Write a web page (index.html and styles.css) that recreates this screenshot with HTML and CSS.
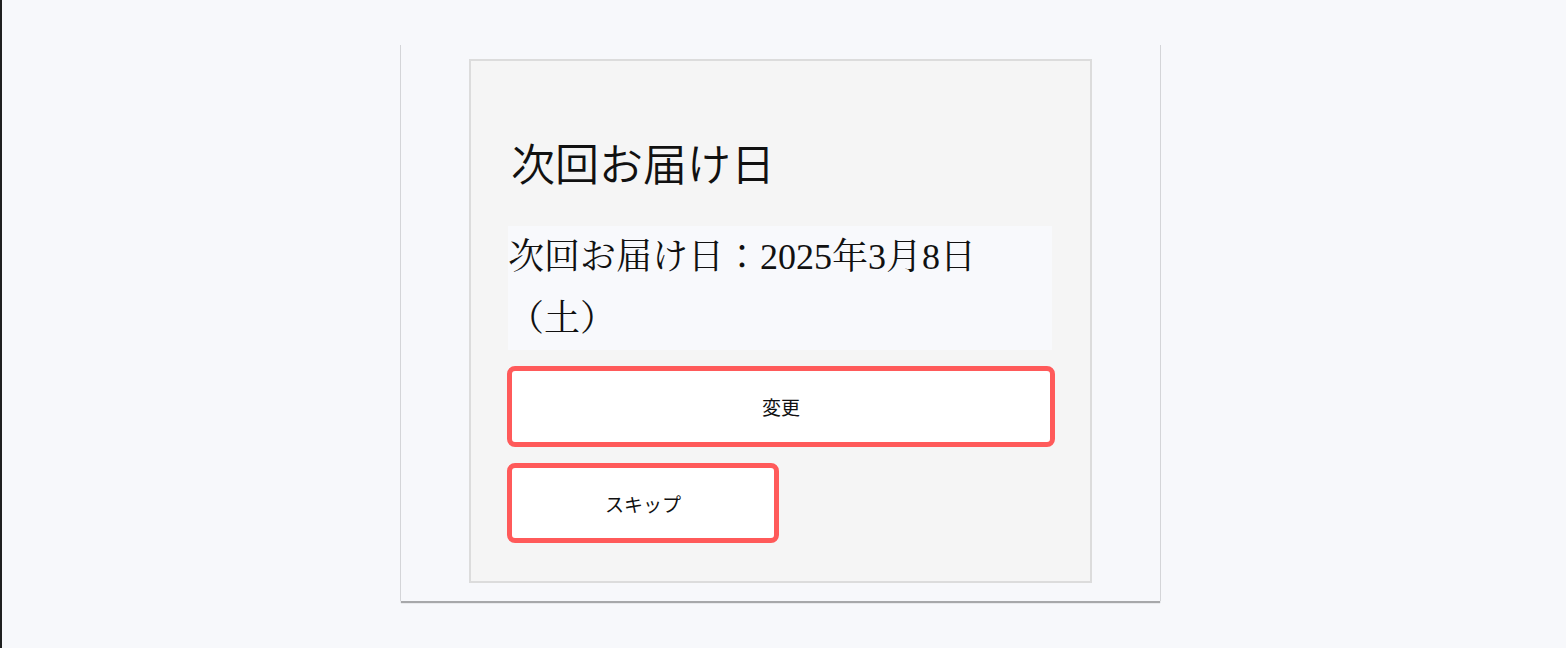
FILE: index.html
```html
<!DOCTYPE html>
<html lang="ja">
<head>
<meta charset="utf-8">
<title>次回お届け日</title>
<link rel="stylesheet" href="styles.css">
</head>
<body>
<div class="page">
  <div class="card">
    <section class="delivery">
      <h2 class="delivery-title">次回お届け日</h2>
      <p class="delivery-date">次回お届け日：2025年3月8日（土）</p>
      <div class="actions">
        <button class="btn btn-full" type="button">変更</button>
        <button class="btn btn-half" type="button">スキップ</button>
      </div>
    </section>
  </div>
</div>
</body>
</html>
```

FILE: styles.css
```css
html, body {
  margin: 0;
  padding: 0;
}
body {
  background: #f7f8fb;
  border-left: 2px solid #1f2020;
  min-height: 648px;
  box-sizing: border-box;
  font-family: "Noto Sans CJK JP", "Noto Sans", sans-serif;
  color: #111;
}
.page {
  display: flex;
  padding: 45px 0 0 399px;
}
.card {
  width: 759px;
  box-sizing: border-box;
  padding: 14px 68px 18px 68px;
  background: #f7f8fb;
  box-shadow: -1px 0 0 #d4d5d8, 1px 0 0 #d4d5d8, 0 2px 1px rgba(0,0,0,0.32);
}
.delivery {
  background: #f5f5f5;
  border: 2px solid #dcdcdc;
  padding: 69px 35px 38px 36px;
  display: flex;
  flex-direction: column;
}
.delivery-title {
  margin: 0 0 0 4px;
  font-size: 44px;
  font-weight: 350;
  line-height: 64px;
  color: #111;
}
.delivery-date {
  margin: 32px 3px 16px 1px;
  background: #f8f9fc;
  font-family: "Liberation Serif", "Noto Serif CJK JP", "Noto Sans CJK JP", serif;
  font-size: 36px;
  line-height: 62px;
  color: #111;
}
.actions {
  display: flex;
  flex-direction: column;
  align-items: flex-start;
  gap: 16px;
}
.btn {
  height: 81px;
  box-sizing: border-box;
  background: #fff;
  border: 5px solid #ff5a5a;
  border-radius: 8px;
  font-family: "Noto Sans CJK JP", "Noto Sans", sans-serif;
  font-size: 19px;
  color: #111;
  padding: 0;
}
.btn-full {
  width: 100%;
}
.btn-half {
  width: 272px;
  height: 80px;
}
```
